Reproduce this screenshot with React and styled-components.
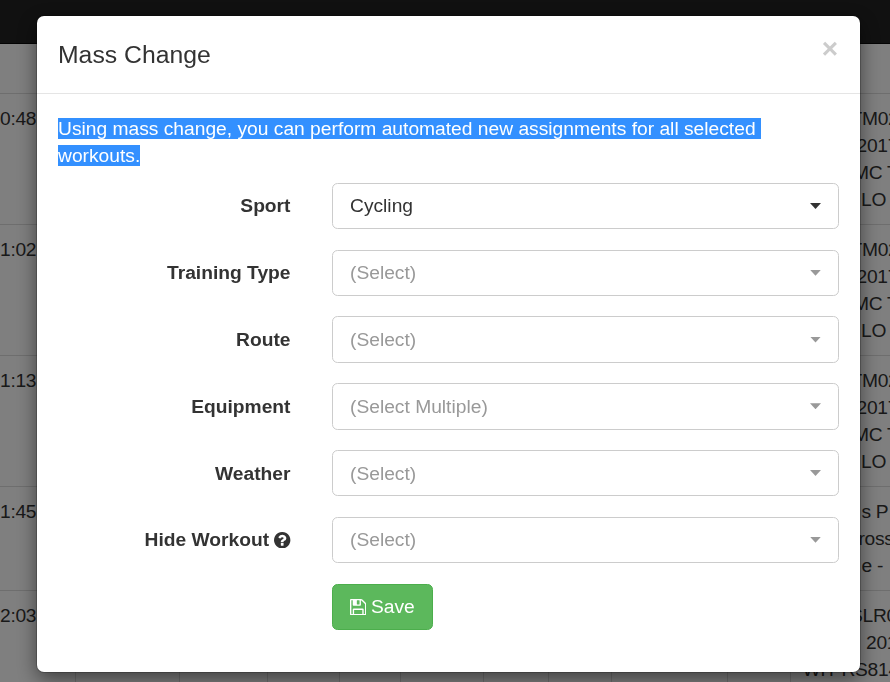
import React from "react";
import styled, { createGlobalStyle } from "styled-components";

const Global = createGlobalStyle`
  * { box-sizing: border-box; }
  html, body { margin: 0; height: 100%; overflow: hidden; }
  body {
    background: #fff;
    color: #333;
    font: 19.23px/27px "Liberation Sans", Arial, sans-serif;
  }
`;

const Page = styled.div`
  width: 890px;
  height: 682px;
  overflow: hidden;
`;

const NavBar = styled.header`
  height: 44px;
  background: #222;
  border-bottom: 1px solid #080808;
`;

const TableHead = styled.div`
  height: 49px;
`;

const TableRow = styled.div`
  display: grid;
  grid-template-columns: 76px 104px 88px 72px 61px 83px 65px 63px 116px 63px 99px;
  height: ${(p) => p.$height}px;
  border-top: 1px solid #ddd;
`;

const Cell = styled.div`
  padding-top: 10.5px;
  border-right: 1px solid ${(p) => (p.$ruled ? "#ddd" : "transparent")};
  letter-spacing: -0.3px;
  white-space: nowrap;
`;

const NoteLine = styled.div`
  padding-left: ${(p) => p.$indent}px;
`;

const Backdrop = styled.div`
  position: fixed;
  inset: 0;
  padding: 16px 30px 0 37px;
  background: rgba(0, 0, 0, 0.5);
`;

const Dialog = styled.section`
  width: 823px;
  height: 656px;
  background: #fff;
  border-radius: 7px;
  box-shadow: 0 7px 20px rgba(0, 0, 0, 0.5), 0 0 0 1px rgba(0, 0, 0, 0.2);
`;

const DialogHeader = styled.div`
  display: flex;
  justify-content: space-between;
  height: 78px;
  padding: 21px 22px 0 21px;
  border-bottom: 1px solid #e5e5e5;
`;

const Title = styled.h4`
  margin: 0;
  font-size: 24.75px;
  font-weight: 400;
  line-height: 35px;
`;

const CloseButton = styled.button`
  height: 24px;
  padding: 0;
  border: 0;
  background: none;
  color: #ccc;
  font: 700 28px/24px "Liberation Sans", Arial, sans-serif;
`;

const DialogBody = styled.div`
  padding: 21px 21px 0;
`;

const Intro = styled.p`
  margin: 0 0 13.9px;
  color: #fff;
  white-space: pre-wrap;
`;

const Selected = styled.span`
  background: #3390ff;
`;

const FormRow = styled.div`
  display: grid;
  grid-template-columns: 232.5px 507px;
  column-gap: 41.5px;
  height: 46.4px;
  margin-bottom: 20.38px;
`;

const Label = styled.label`
  display: flex;
  align-items: center;
  justify-content: flex-end;
  gap: 5px;
  padding-bottom: 0.2px;
  font-weight: 700;
`;

const Select = styled.div`
  display: flex;
  align-items: center;
  justify-content: space-between;
  padding: 0 17px 0.2px;
  border: 1px solid #ccc;
  border-radius: 5.5px;
  color: ${(p) => (p.$filled ? "#333" : "#999")};
`;

const Caret = styled.span`
  width: 11px;
  height: 6px;
  background: currentColor;
  clip-path: polygon(0 0, 100% 0, 50% 100%);
`;

const SaveButton = styled.button`
  grid-column: 2;
  justify-self: start;
  display: flex;
  align-items: center;
  gap: 5px;
  width: 101px;
  height: 46px;
  margin-top: 0.3px;
  padding: 0 0 0 16.5px;
  border: 1px solid #4cae4c;
  border-radius: 5.5px;
  background: #5cb85c;
  color: #fff;
  font: inherit;
`;

const Icon = styled.svg`
  width: 16.4px;
  height: 16.4px;
  fill: currentColor;
`;

const rows = [
  { time: "0:48", height: 131, notes: [["TM02", 59.5], ["2017", 65.5], ["MC TT", 62], ["LO", 70]] },
  { time: "1:02", height: 131, notes: [["TM02", 59.5], ["2017", 65.5], ["MC TT", 62], ["LO", 70]] },
  { time: "1:13", height: 131, notes: [["TM02", 59.5], ["2017", 65.5], ["MC TT", 62], ["LO", 70]] },
  { time: "1:45", height: 104, notes: [["s P", 70.5], ["ross", 67.5], ["e -", 70.5]] },
  { time: "2:03", height: 104, ruled: true, notes: [["SLR0", 59], ["2017", 75], ["WIT RS814", 11.5]] },
];

const fields = [
  { label: "Sport", value: "Cycling", filled: true },
  { label: "Training Type", value: "(Select)" },
  { label: "Route", value: "(Select)" },
  { label: "Equipment", value: "(Select Multiple)" },
  { label: "Weather", value: "(Select)" },
  { label: "Hide Workout", value: "(Select)", help: true },
];

const HelpIcon = () => (
  <Icon viewBox="128 128 1536 1536">
    <path d="M1024 1376v-192q0-14-9-23t-23-9h-192q-14 0-23 9t-9 23v192q0 14 9 23t23 9h192q14 0 23-9t9-23zm256-672q0-88-55.5-163t-138.5-116-170-41q-243 0-371 213-15 24 8 42l132 100q7 6 19 6 16 0 25-12 53-68 86-92 34-24 86-24 48 0 85.500 26t37.500 59q0 38-20 61t-68 45q-63 28-115.500 86.500t-52.500 125.500v36q0 14 9 23t23 9h192q14 0 23-9t9-23q0-19 21.500-49.500t54.500-49.500q32-18 49-28.500t46-35 44.500-48 28-60.500 12.500-81zm384 192q0 209-103 385.500t-279.500 279.500-385.500 103-385.500-103-279.500-279.500-103-385.500 103-385.500 279.500-279.500 385.500-103 385.500 103 279.500 279.500 103 385.500z" />
  </Icon>
);

const SaveIcon = () => (
  <Icon viewBox="0 128 1536 1536">
    <path d="M384 1536h768v-384h-768v384zM1280 1536h128v-896q0-14-10-38.500t-20-34.500l-281-281q-10-10-34-20t-39-10v416q0 40-28 68t-68 28h-576q-40 0-68-28t-28-68v-416h-128v1280h128v-416q0-40 28-68t68-28h832q40 0 68 28t28 68v416zM896 608v-320q0-13-9.500-22.500t-22.500-9.500h-192q-13 0-22.500 9.500t-9.500 22.500v320q0 13 9.500 22.500t22.500 9.500h192q13 0 22.500-9.500t9.500-22.500zM1536 640v928q0 40-28 68t-68 28h-1344q-40 0-68-28t-28-68v-1344q0-40 28-68t68-28h928q40 0 88 20t76 48l280 280q28 28 48 76t20 88z" />
  </Icon>
);

export default function App() {
  return (
    <>
      <Global />
      <Page>
        <NavBar />
        <TableHead />
        {rows.map((row) => (
          <TableRow key={row.time} $height={row.height}>
            <Cell $ruled={row.ruled}>{row.time}</Cell>
            {Array.from({ length: 9 }, (_, i) => (
              <Cell key={i} $ruled={row.ruled} />
            ))}
            <Cell>
              {row.notes.map(([text, indent]) => (
                <NoteLine key={text} $indent={indent}>{text}</NoteLine>
              ))}
            </Cell>
          </TableRow>
        ))}
      </Page>
      <Backdrop>
        <Dialog role="dialog">
          <DialogHeader>
            <Title>Mass Change</Title>
            <CloseButton aria-label="Close">×</CloseButton>
          </DialogHeader>
          <DialogBody>
            <Intro>
              <Selected>
                {"Using mass change, you can perform automated new assignments for all selected "}
                <br />
                workouts.
              </Selected>
            </Intro>
            {fields.map((field) => (
              <FormRow key={field.label}>
                <Label>
                  {field.label}
                  {field.help && <HelpIcon />}
                </Label>
                <Select $filled={field.filled}>
                  {field.value}
                  <Caret />
                </Select>
              </FormRow>
            ))}
            <FormRow>
              <SaveButton>
                <SaveIcon />
                Save
              </SaveButton>
            </FormRow>
          </DialogBody>
        </Dialog>
      </Backdrop>
    </>
  );
}
